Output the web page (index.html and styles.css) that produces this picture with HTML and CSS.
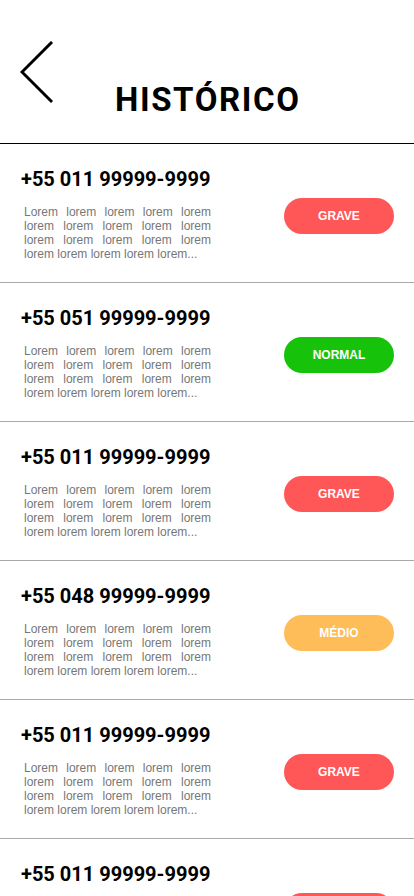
FILE: index.html
```html
<!DOCTYPE html>
<html lang="pt">
<head>
<meta charset="utf-8">
<title>Histórico</title>
<link rel="stylesheet" href="styles.css">
</head>
<body>
<header class="header">
  <a class="back" href="#" aria-label="Voltar">
    <svg width="36" height="64" viewBox="0 0 36 64"><polyline points="32,1 2,31 32,61" fill="none" stroke="#000" stroke-width="3"/></svg>
  </a>
  <h1 class="title">HISTÓRICO</h1>
</header>
<main class="list">
  <div class="row">
    <div class="info">
      <div class="phone">+55 011 99999-9999</div>
      <p class="desc">Lorem lorem lorem lorem lorem lorem lorem lorem lorem lorem lorem lorem lorem lorem lorem lorem lorem lorem lorem lorem...</p>
    </div>
    <span class="badge grave">GRAVE</span>
  </div>
  <div class="row">
    <div class="info">
      <div class="phone">+55 051 99999-9999</div>
      <p class="desc">Lorem lorem lorem lorem lorem lorem lorem lorem lorem lorem lorem lorem lorem lorem lorem lorem lorem lorem lorem lorem...</p>
    </div>
    <span class="badge normal">NORMAL</span>
  </div>
  <div class="row">
    <div class="info">
      <div class="phone">+55 011 99999-9999</div>
      <p class="desc">Lorem lorem lorem lorem lorem lorem lorem lorem lorem lorem lorem lorem lorem lorem lorem lorem lorem lorem lorem lorem...</p>
    </div>
    <span class="badge grave">GRAVE</span>
  </div>
  <div class="row">
    <div class="info">
      <div class="phone">+55 048 99999-9999</div>
      <p class="desc">Lorem lorem lorem lorem lorem lorem lorem lorem lorem lorem lorem lorem lorem lorem lorem lorem lorem lorem lorem lorem...</p>
    </div>
    <span class="badge medio">MÉDIO</span>
  </div>
  <div class="row">
    <div class="info">
      <div class="phone">+55 011 99999-9999</div>
      <p class="desc">Lorem lorem lorem lorem lorem lorem lorem lorem lorem lorem lorem lorem lorem lorem lorem lorem lorem lorem lorem lorem...</p>
    </div>
    <span class="badge grave">GRAVE</span>
  </div>
  <div class="row">
    <div class="info">
      <div class="phone">+55 011 99999-9999</div>
      <p class="desc">Lorem lorem lorem lorem lorem lorem lorem lorem lorem lorem lorem lorem lorem lorem lorem lorem lorem lorem lorem lorem...</p>
    </div>
    <span class="badge grave">GRAVE</span>
  </div>
</main>
</body>
</html>
```

FILE: styles.css
```css
* { box-sizing: border-box; }
html, body { margin: 0; padding: 0; background: #fff; }
body { font-family: Roboto, "Liberation Sans", sans-serif; color: #000; overflow: hidden; }

.header {
  height: 144px;
  border-bottom: 1px solid #000;
  display: grid;
  grid-template-columns: 1fr auto 1fr;
  align-items: start;
}
.back {
  grid-column: 1;
  grid-row: 1;
  display: block;
  width: 36px;
  height: 64px;
  margin: 41px 0 0 20px;
}
.back svg { display: block; }
.title {
  grid-column: 2;
  grid-row: 1;
  margin: 80px -1.6px 0 0;
  font-size: 33px;
  line-height: 40px;
  font-weight: 700;
  letter-spacing: 1.6px;
}

.row {
  height: 139px;
  border-bottom: 1px solid #aaa;
  display: flex;
  justify-content: space-between;
  align-items: flex-start;
  padding: 23px 20px 0 21px;
}
.phone {
  font-size: 20px;
  line-height: 24px;
  font-weight: 700;
}
.desc {
  margin: 14px 0 0 3px;
  width: 187px;
  font-family: "Liberation Sans", Arial, sans-serif;
  font-size: 12px;
  line-height: 14px;
  color: #777;
  text-align: justify;
}
.badge {
  margin-top: 31px;
  width: 110px;
  height: 36px;
  border-radius: 18px;
  display: flex;
  align-items: center;
  justify-content: center;
  font-family: "Liberation Sans", Arial, sans-serif;
  font-weight: 700;
  font-size: 12px;
  color: #fff;
}
.grave { background: #ff5757; }
.normal { background: #17c20b; }
.medio { background: #ffbd59; }
```
